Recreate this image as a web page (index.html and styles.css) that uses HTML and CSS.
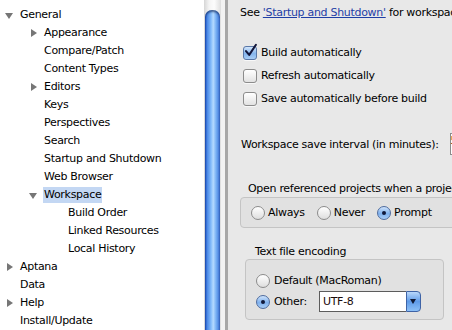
FILE: index.html
```html
<!DOCTYPE html>
<html lang="en">
<head>
    <meta charset="UTF-8">
    <meta name="viewport" content="width=device-width, initial-scale=1.0">
    <title>Preferences - Workspace</title>
    <link rel="stylesheet" href="styles.css">
</head>
<body>
    <div class="window">
        <div class="tree">
            <div class="row l0"><span class="twisty open"></span><span class="label">General</span></div>
            <div class="row l1"><span class="twisty closed"></span><span class="label">Appearance</span></div>
            <div class="row l1"><span class="twisty"></span><span class="label">Compare/Patch</span></div>
            <div class="row l1"><span class="twisty"></span><span class="label">Content Types</span></div>
            <div class="row l1"><span class="twisty closed"></span><span class="label">Editors</span></div>
            <div class="row l1"><span class="twisty"></span><span class="label">Keys</span></div>
            <div class="row l1"><span class="twisty"></span><span class="label">Perspectives</span></div>
            <div class="row l1"><span class="twisty"></span><span class="label">Search</span></div>
            <div class="row l1"><span class="twisty"></span><span class="label">Startup and Shutdown</span></div>
            <div class="row l1"><span class="twisty"></span><span class="label">Web Browser</span></div>
            <div class="row l1"><span class="twisty open"></span><span class="label selected">Workspace</span></div>
            <div class="row l2"><span class="twisty"></span><span class="label">Build Order</span></div>
            <div class="row l2"><span class="twisty"></span><span class="label">Linked Resources</span></div>
            <div class="row l2"><span class="twisty"></span><span class="label">Local History</span></div>
            <div class="row l0"><span class="twisty closed"></span><span class="label">Aptana</span></div>
            <div class="row l0"><span class="twisty"></span><span class="label">Data</span></div>
            <div class="row l0"><span class="twisty closed"></span><span class="label">Help</span></div>
            <div class="row l0"><span class="twisty"></span><span class="label">Install/Update</span></div>
        </div>

        <div class="vscroll"><div class="thumb"></div></div>
        <div class="sash"></div>

        <div class="page">
            <p class="intro">See <a href="#" class="link">'Startup and Shutdown'</a> for workspace startup and shutdown preferences.</p>

            <div class="checks">
                <label class="check-row"><span class="check on"><svg class="tick" viewBox="0 0 16 16"><path d="M3.2 7.6 L6.6 11.6 L13.8 0.8"/></svg></span>Build automatically</label>
                <label class="check-row"><span class="check"></span>Refresh automatically</label>
                <label class="check-row"><span class="check"></span>Save automatically before build</label>
            </div>

            <div class="interval">
                <span>Workspace save interval (in minutes):</span>
                <span class="field">5</span>
            </div>

            <div class="group wide">
                <div class="group-title">Open referenced projects when a project is opened</div>
                <div class="group-box radios-inline">
                    <label class="radio-item"><span class="radio"></span>Always</label>
                    <label class="radio-item"><span class="radio"></span>Never</label>
                    <label class="radio-item"><span class="radio on"></span>Prompt</label>
                </div>
            </div>

            <div class="group encoding">
                <div class="group-title">Text file encoding</div>
                <div class="group-box">
                    <label class="radio-row"><span class="radio"></span>Default (MacRoman)</label>
                    <div class="radio-row">
                        <span class="radio on"></span>Other:
                        <div class="combo">
                            <span class="combo-text">UTF-8</span>
                            <span class="combo-button"><span class="arrow"></span></span>
                        </div>
                    </div>
                </div>
            </div>
        </div>
    </div>
</body>
</html>
```

FILE: styles.css
```css
body {
    margin: 0;
    font-family: 'DejaVu Sans', Verdana, sans-serif;
    font-size: 11px;
    letter-spacing: -0.3px;
    color: #000;
    overflow: hidden;
}
.window {
    display: flex;
    width: 452px;
    height: 330px;
    overflow: hidden;
}

/* tree */
.tree {
    width: 204px;
    flex: none;
    background-color: #fff;
    padding-top: 6px;
    box-sizing: border-box;
}
.row {
    display: flex;
    align-items: center;
    height: 18px;
    white-space: nowrap;
}
.l1 { padding-left: 24px; }
.l2 { padding-left: 48px; }
.twisty {
    width: 20px;
    height: 18px;
    flex: none;
    display: flex;
    align-items: center;
}
.twisty.closed::before {
    content: "";
    margin-left: 7px;
    border-left: 6px solid #767676;
    border-top: 4px solid transparent;
    border-bottom: 4px solid transparent;
}
.twisty.open::before {
    content: "";
    margin-left: 5px;
    margin-top: 1px;
    border-top: 6px solid #767676;
    border-left: 4px solid transparent;
    border-right: 4px solid transparent;
}
.label {
    line-height: 16px;
}
.label.selected {
    background-color: #c3d7f3;
    padding: 0 1px;
    margin-left: -1px;
}

/* scrollbar + sash */
.vscroll {
    width: 17px;
    flex: none;
    padding-top: 10px;
    box-sizing: border-box;
    background: linear-gradient(to right, #d6d6d6, #f4f4f4 30%, #fcfcfc 60%, #dedede);
}
.thumb {
    height: 100%;
    margin: 0 1px 0 1px;
    border-radius: 7px 7px 0 0;
    background: linear-gradient(to right, #1d52c2, #4a88e6 15%, #83bbfa 40%, #b5daff 55%, #74adf3 75%, #3a70d6);
    box-shadow: inset 0 2px 2px rgba(10, 30, 80, 0.6);
}
.sash {
    width: 4px;
    flex: none;
    background-color: #f3f3f3;
    border-right: 3px solid #a8a8a8;
}

/* page */
.page {
    flex: 1;
    min-width: 0;
    background-color: #e8e8e8;
    padding-left: 12px;
    overflow: hidden;
    white-space: nowrap;
}
.intro {
    margin: 0;
    height: 26px;
    line-height: 26px;
}
.link {
    color: #1f3fa6;
}
.checks {
    margin-top: 15px;
}
.check-row {
    display: flex;
    align-items: center;
    height: 23px;
    padding-left: 3px;
    gap: 4px;
}
.check {
    position: relative;
    width: 12px;
    height: 12px;
    flex: none;
    border: 1px solid #8c8c8c;
    border-radius: 3px;
    background: linear-gradient(#ffffff, #e2e2e2);
    box-shadow: 0 1px 0 rgba(255, 255, 255, 0.7);
}
.check.on {
    border-color: #5a78a8;
    background: linear-gradient(#d2e5fb, #86b6ee 55%, #a9cdf5);
}
.tick {
    position: absolute;
    left: -1px;
    top: -3px;
    width: 15px;
    height: 15px;
    overflow: visible;
}
.tick path {
    fill: none;
    stroke: #13163a;
    stroke-width: 2.2;
    stroke-linecap: round;
    stroke-linejoin: round;
}
.interval {
    display: flex;
    align-items: center;
    gap: 11px;
    margin-top: 23px;
    height: 22px;
    padding-left: 1px;
}
.field {
    flex: none;
    width: 60px;
    height: 20px;
    border: 1px solid #8c8c8c;
    background-color: #fff;
}

/* groups */
.group-title {
    height: 14px;
    line-height: 14px;
}
.group-box {
    border: 1px solid #c4c4c4;
    border-radius: 4px;
    background-color: #e1e1e1;
    box-sizing: border-box;
}
.wide {
    margin-top: 27px;
}
.wide .group-title {
    padding-left: 8px;
}
.wide .group-box {
    width: 300px;
    height: 31px;
    margin-top: 1px;
}
.radios-inline {
    display: flex;
    align-items: center;
    gap: 12px;
    padding-left: 10px;
}
.radio-item {
    display: flex;
    align-items: center;
    gap: 3px;
}
.radio {
    position: relative;
    width: 12px;
    height: 12px;
    flex: none;
    border: 1px solid #8c8c8c;
    border-radius: 50%;
    background: linear-gradient(#ffffff, #dedede);
}
.radio.on {
    border-color: #4f6c9e;
    background: linear-gradient(#cfe3fb, #7fb1ee 55%, #a8ccf6);
}
.radio.on::after {
    content: "";
    position: absolute;
    left: 4px;
    top: 4px;
    width: 4px;
    height: 4px;
    border-radius: 50%;
    background-color: #10183a;
}
.encoding {
    margin-top: 17px;
    margin-left: 5px;
}
.encoding .group-title {
    padding-left: 10px;
}
.encoding .group-box {
    width: 199px;
    height: 61px;
    padding: 10px 0 0 10px;
}
.radio-row {
    display: flex;
    align-items: center;
    gap: 4px;
    height: 21px;
}
.combo {
    display: flex;
    width: 102px;
    height: 21px;
    margin-left: 8px;
    box-sizing: border-box;
}
.combo-text {
    flex: 1;
    border: 1px solid #5c5c5c;
    border-right: none;
    background-color: #fff;
    padding-left: 3px;
    line-height: 19px;
    color: #1a0a0a;
}
.combo-button {
    width: 15px;
    flex: none;
    display: flex;
    align-items: center;
    justify-content: center;
    border: 1px solid #3e63a6;
    border-radius: 0 4px 4px 0;
    background: linear-gradient(#b9d8fb, #5f9be9 50%, #8cc0f7);
    box-sizing: border-box;
}
.arrow {
    border-top: 5px solid #101a36;
    border-left: 3px solid transparent;
    border-right: 3px solid transparent;
}
```
